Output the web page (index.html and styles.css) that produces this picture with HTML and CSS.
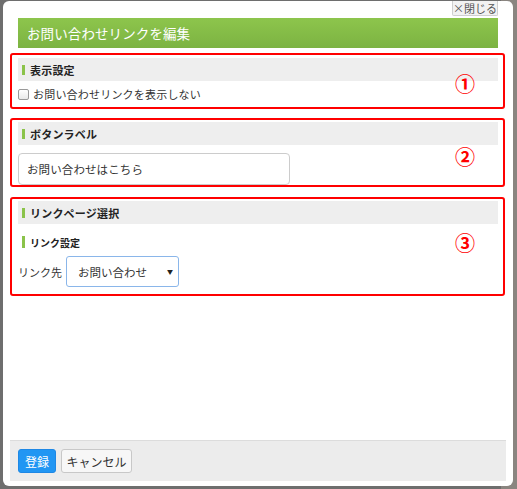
FILE: index.html
```html
<!DOCTYPE html>
<html lang="ja">
<head>
<meta charset="utf-8">
<title>お問い合わせリンクを編集</title>
<link rel="stylesheet" href="styles.css">
</head>
<body>
<div class="modal">
  <div class="topbar"><button class="close-btn">×閉じる</button></div>
  <div class="content">
    <h1 class="title">お問い合わせリンクを編集</h1>

    <section class="box box-1">
      <h2 class="sec-head">表示設定</h2>
      <label class="check-row"><span class="checkbox"></span>お問い合わせリンクを表示しない</label>
      <span class="mark mark-1">①</span>
    </section>

    <section class="box box-2">
      <h2 class="sec-head">ボタンラベル</h2>
      <div class="text-input">お問い合わせはこちら</div>
      <span class="mark mark-2">②</span>
    </section>

    <section class="box box-3">
      <h2 class="sec-head">リンクページ選択</h2>
      <h3 class="sub-head">リンク設定</h3>
      <div class="link-row">
        <span class="link-label">リンク先</span>
        <div class="select">お問い合わせ<span class="arrow">▼</span></div>
      </div>
      <span class="mark mark-3">③</span>
    </section>
  </div>
  <div class="footer">
    <button class="btn btn-primary">登録</button>
    <button class="btn btn-default">キャンセル</button>
  </div>
</div>
</body>
</html>
```

FILE: styles.css
```css
* { box-sizing: border-box; }
html, body { height: 100%; }
body {
  margin: 0;
  padding: 1px 4px 3px 3px;
  background: linear-gradient(to right, #6e6e6e 0, #6e6e6e 97%, #8a8580 97%, #8a8580 100%);
  font-family: "Noto Sans CJK JP", "Noto Sans", sans-serif;
  color: #333;
}
.modal {
  height: 485px;
  background: #fff;
  border-radius: 6px;
  padding: 0 7px;
  display: flex;
  flex-direction: column;
}
.topbar {
  height: 16px;
  display: flex;
  justify-content: flex-end;
  padding-right: 8px;
}
.close-btn {
  height: 15px;
  width: 46px;
  margin: 0;
  padding: 0;
  border: 1px solid #cfcfcf;
  border-top: none;
  background: #f2f2f2;
  color: #555;
  font-family: inherit;
  font-size: 11px;
  line-height: 13px;
  white-space: nowrap;
  border-radius: 0 0 2px 2px;
}
.content {
  padding: 0 8px;
}
.title {
  margin: 1px 0 0;
  height: 30px;
  padding-left: 9px;
  background: linear-gradient(#8dc54c, #7cb342);
  color: #fff;
  font-size: 13.5px;
  font-weight: normal;
  line-height: 30px;
  letter-spacing: 0.1px;
}
.box {
  position: relative;
  margin: 9px -7px 0 -8px;
  border: 2px solid #f00;
  border-radius: 3px;
  padding: 2px 5px 0 6px;
}
.box-1 { margin-top: 5px; padding-top: 3px; }
.box-3 { margin-top: 10px; padding-bottom: 7px; }
.sec-head {
  margin: 0;
  height: 23px;
  background: #eee;
  display: flex;
  align-items: center;
  padding-left: 4px;
  font-size: 11px;
  font-weight: bold;
  color: #222;
  letter-spacing: 0.2px;
}
.sec-head::before, .sub-head::before {
  content: "";
  width: 3px;
  height: 10px;
  background: #8bc34a;
  margin-right: 5px;
}
.check-row {
  display: flex;
  align-items: center;
  height: 26px;
  font-size: 11px;
  color: #333;
  letter-spacing: 0.2px;
}
.checkbox {
  width: 11px;
  height: 11px;
  border: 1px solid #999;
  border-radius: 2px;
  background: linear-gradient(#fff, #e9e9e9);
  margin-right: 4px;
}
.text-input {
  margin-top: 8px;
  width: 272px;
  height: 32px;
  border: 1px solid #ccc;
  border-radius: 4px;
  padding-left: 8px;
  display: flex;
  align-items: center;
  font-size: 11.5px;
  color: #333;
  letter-spacing: 0.1px;
}
.sub-head {
  margin: 11px 0 0;
  height: 14px;
  display: flex;
  align-items: center;
  padding-left: 4px;
  font-size: 10px;
  font-weight: bold;
  color: #222;
}
.sub-head::before { height: 12px; }
.link-row {
  margin-top: 7px;
  display: flex;
  align-items: center;
}
.link-label {
  font-size: 11px;
  color: #333;
  width: 48px;
}
.select {
  width: 113px;
  height: 31px;
  border: 1px solid #8ab6ea;
  border-radius: 3px;
  padding-left: 11px;
  display: flex;
  align-items: center;
  font-size: 11.5px;
  color: #333;
}
.arrow {
  margin-left: auto;
  margin-right: 5px;
  font-size: 6px;
  color: #222;
}
.mark {
  position: absolute;
  right: 27px;
  width: 22px;
  text-align: center;
  color: #f00;
  font-size: 20px;
  font-weight: bold;
  line-height: 20px;
}
.mark-1 { top: 19px; }
.mark-2 { top: 27px; }
.mark-3 { top: 34px; }
.footer {
  margin-top: auto;
  margin-bottom: 5px;
  height: 41px;
  background: #ececec;
  border-top: 1px solid #dcdcdc;
  padding: 8px 8px 0;
  display: flex;
  gap: 5px;
  align-items: flex-start;
}
.btn {
  height: 24px;
  margin: 0;
  padding: 0;
  border-radius: 3px;
  font-family: inherit;
  font-size: 12px;
  white-space: nowrap;
}
.btn-primary {
  width: 38px;
  background: #2196f3;
  border: 1px solid #1e88e5;
  color: #fff;
}
.btn-default {
  width: 71px;
  background: #f7f7f7;
  border: 1px solid #c8c8c8;
  color: #333;
}
```
